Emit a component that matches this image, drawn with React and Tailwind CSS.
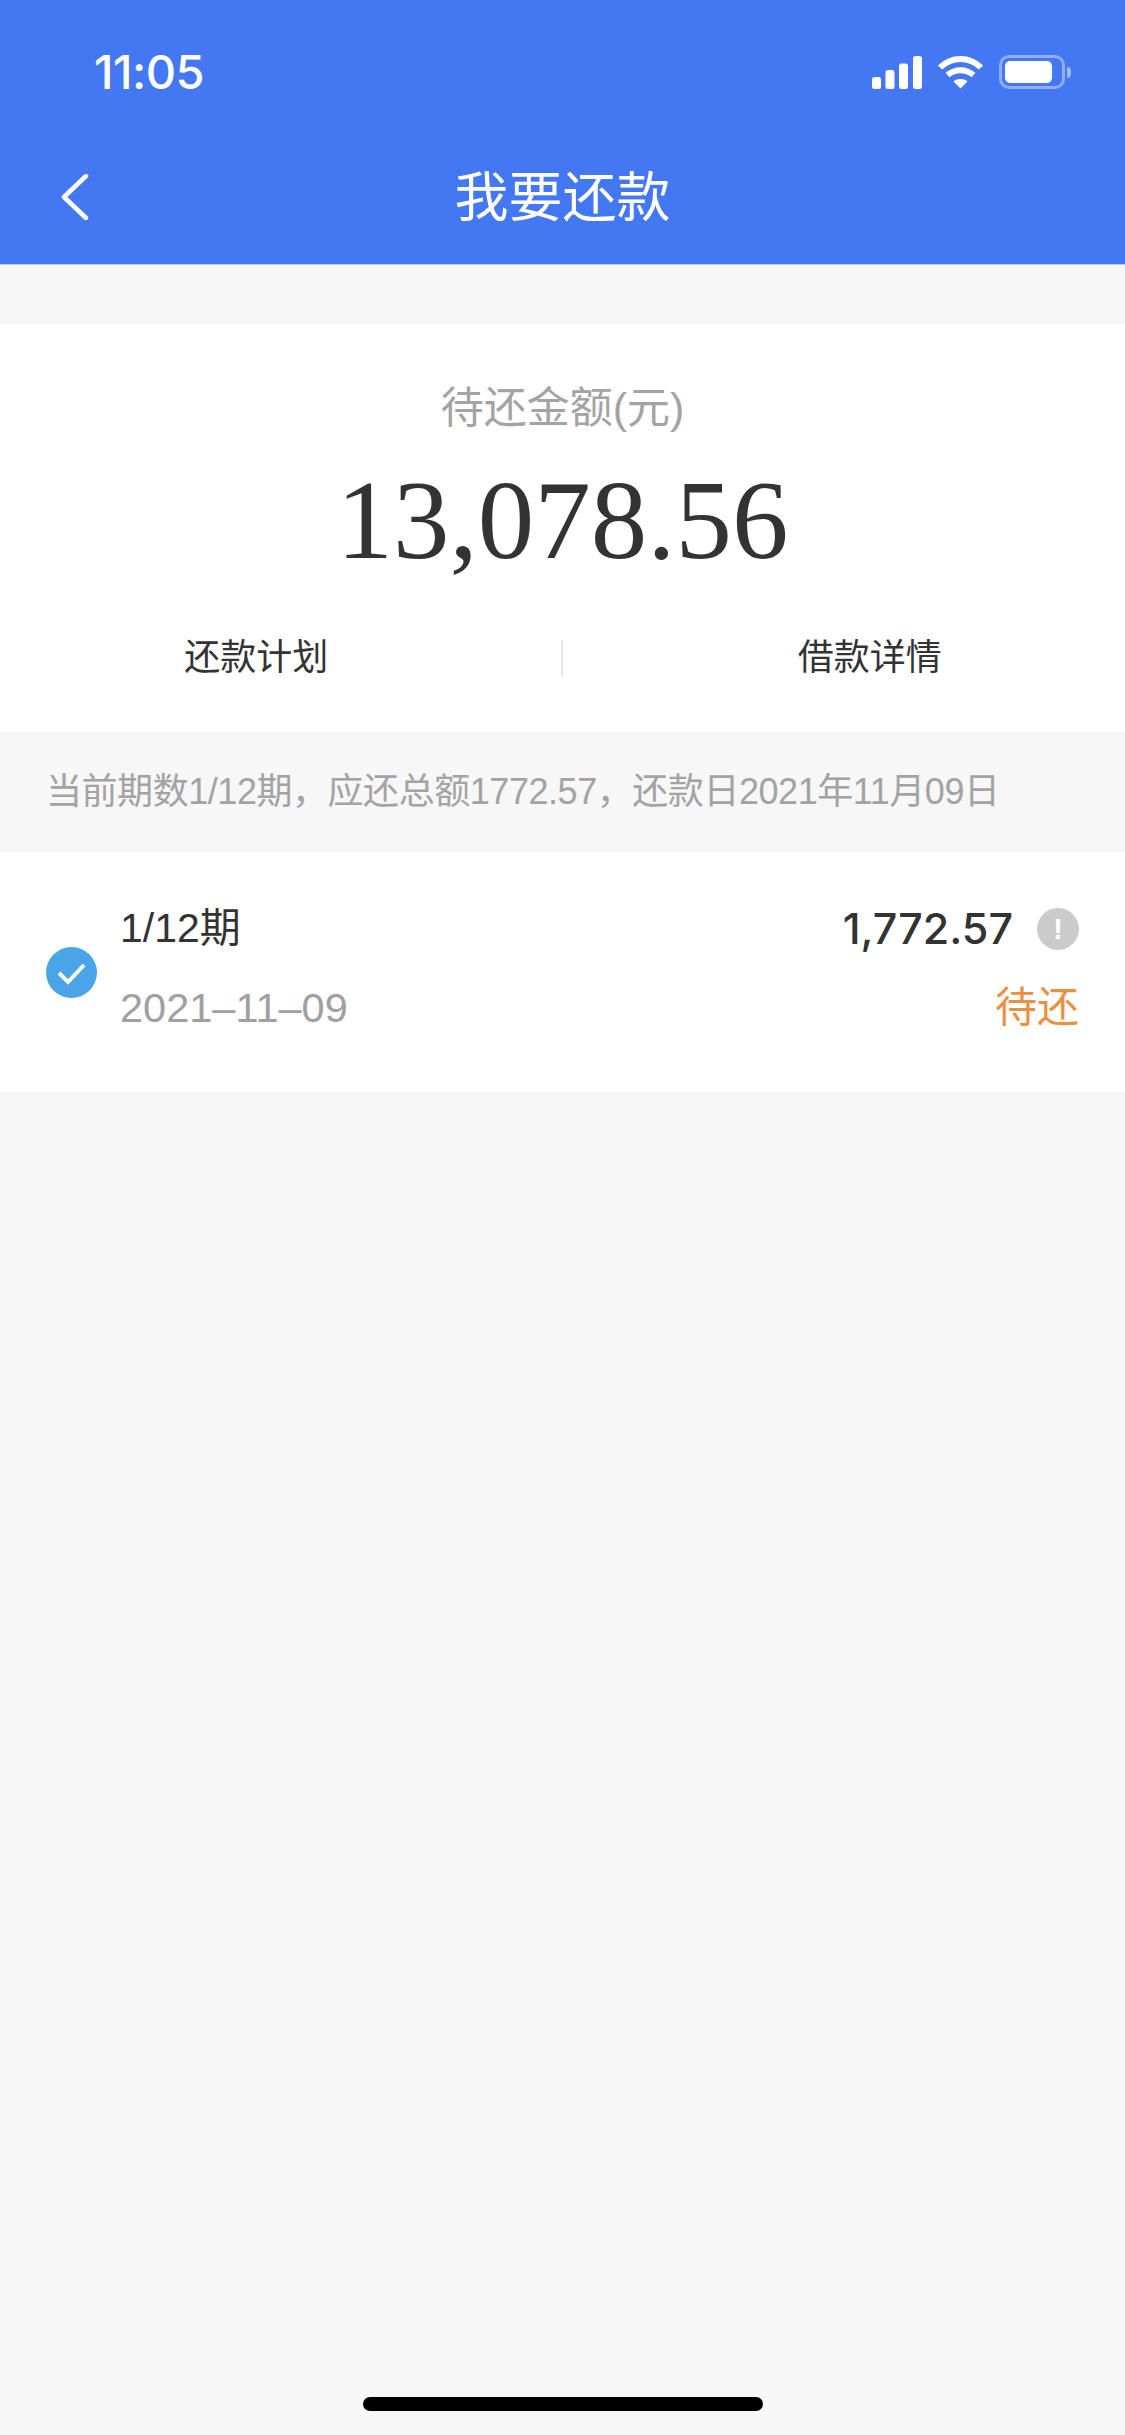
const SANS = "font-['Liberation_Sans','Noto_Sans_CJK_SC',sans-serif]";
const INTER = "font-['Inter','Noto_Sans_CJK_SC',sans-serif]";

const StatusIcons = () => (
  <div className="flex items-center gap-[15px]">
    {/* signal */}
    <svg width="50" height="33" viewBox="0 0 50 33" fill="#fff">
      <rect x="0" y="21" width="9" height="12" rx="2.5" />
      <rect x="13.5" y="14" width="9" height="19" rx="2.5" />
      <rect x="27" y="7.5" width="9" height="25.5" rx="2.5" />
      <rect x="41" y="0" width="9" height="33" rx="2.5" />
    </svg>
    {/* wifi */}
    <svg width="47" height="34" viewBox="0 0 47 34" fill="none" stroke="#fff" strokeWidth="6">
      <path d="M3 12.5C14.5 1 32.5 1 44 12.5" />
      <path d="M10.5 20C18 13.500 29 13.500 36.500 20" />
      <path d="M16.500 26.500C20 23.300 27 23.300 30.500 26.500L23.500 33.500Z" fill="#fff" stroke="none" />
    </svg>
    {/* battery */}
    <div className="flex items-center">
      <div className="w-[66px] h-[34px] rounded-[10px] border-[3px] border-white/40 p-[3px]">
        <div className="w-[47px] h-full rounded-[5px] bg-white" />
      </div>
      <div className="w-[4px] h-[11px] ml-[2px] rounded-r-full bg-white/50" />
    </div>
  </div>
);

export default function App() {
  return (
    <div className={`min-h-[2435px] relative bg-[#f7f7f7] ${SANS}`}>
      <header className="h-[265px] bg-[#4478f3] border-b border-[#c4c9d4] text-white">
        <div className="h-[144px] flex items-center justify-between pl-[94px] pr-[54px]">
          <span className={`mb-[2px] text-[47px] leading-none font-medium tracking-[-0.5px] ${INTER}`}>11:05</span>
          <StatusIcons />
        </div>
        <div className="grid grid-cols-[1fr_auto_1fr] items-center h-[106px] pl-[61px]">
          <svg width="30" height="46" viewBox="0 0 30 46" fill="none" stroke="#fff" strokeWidth="4.500" strokeLinecap="round" strokeLinejoin="round">
            <path d="M25 2 3 23l22 21" />
          </svg>
          <h1 className="mt-[2px] text-[54px] leading-none font-normal -ml-[61px]">我要还款</h1>
          <div />
        </div>
      </header>

      <section className="mt-[59px] h-[408px] bg-white flex flex-col items-center">
        <p className="mt-[54px] text-[43px] leading-[60px] text-[#a3a3a3]">待还金额(元)</p>
        <p className="mt-[18px] text-[113px] leading-[128px] text-[#333] font-['Liberation_Serif',serif]">13,078.56</p>
        <div className="mt-[56px] w-full grid grid-cols-2 items-center">
          <span className="text-center text-[36px] leading-[36px] text-[#333] border-r-2 border-[#e6e6e6] pr-[48px]">还款计划</span>
          <span className="text-center text-[36px] leading-[36px] text-[#333] pl-[52px]">借款详情</span>
        </div>
      </section>

      <p className="h-[120px] flex items-center pl-[46px] text-[36px] tracking-[-0.45px] text-[#a3a3a3]">
        当前期数1/12期，应还总额1772.57，还款日2021年11月09日
      </p>

      <section className="h-[240px] bg-white flex items-center pl-[46px] pr-[46px]">
        <svg className="shrink-0" width="51" height="51" viewBox="0 0 51 51">
          <circle cx="25.500" cy="25.500" r="25.500" fill="#4aa5e8" />
          <path d="M13 26l9 9 16-17" fill="none" stroke="#fff" strokeWidth="4" />
        </svg>
        <div className="ml-[23px] mb-[8px] flex-1 flex flex-col gap-[35px]">
          <div className="flex items-center justify-between h-[44px]">
            <span className="text-[41px] leading-none text-[#333]">1/12期</span>
            <div className="flex items-center gap-[24px]">
              <span className={`text-[43px] leading-none font-medium text-[#333] ${INTER}`}>1,772.57</span>
              <span className="w-[42px] h-[42px] rounded-full bg-[#cbcbcb] flex items-center justify-center text-white text-[30px] font-bold leading-none">!</span>
            </div>
          </div>
          <div className="flex items-center justify-between h-[44px]">
            <span className="text-[41.500px] leading-none text-[#a0a0a0]">2021–11–09</span>
            <span className="text-[42px] leading-none text-[#ee8f3f]">待还</span>
          </div>
        </div>
      </section>

      {/* home indicator */}
      <div className="absolute left-[363px] bottom-[24px] w-[400px] h-[14px] rounded-full bg-black" />
    </div>
  );
}
